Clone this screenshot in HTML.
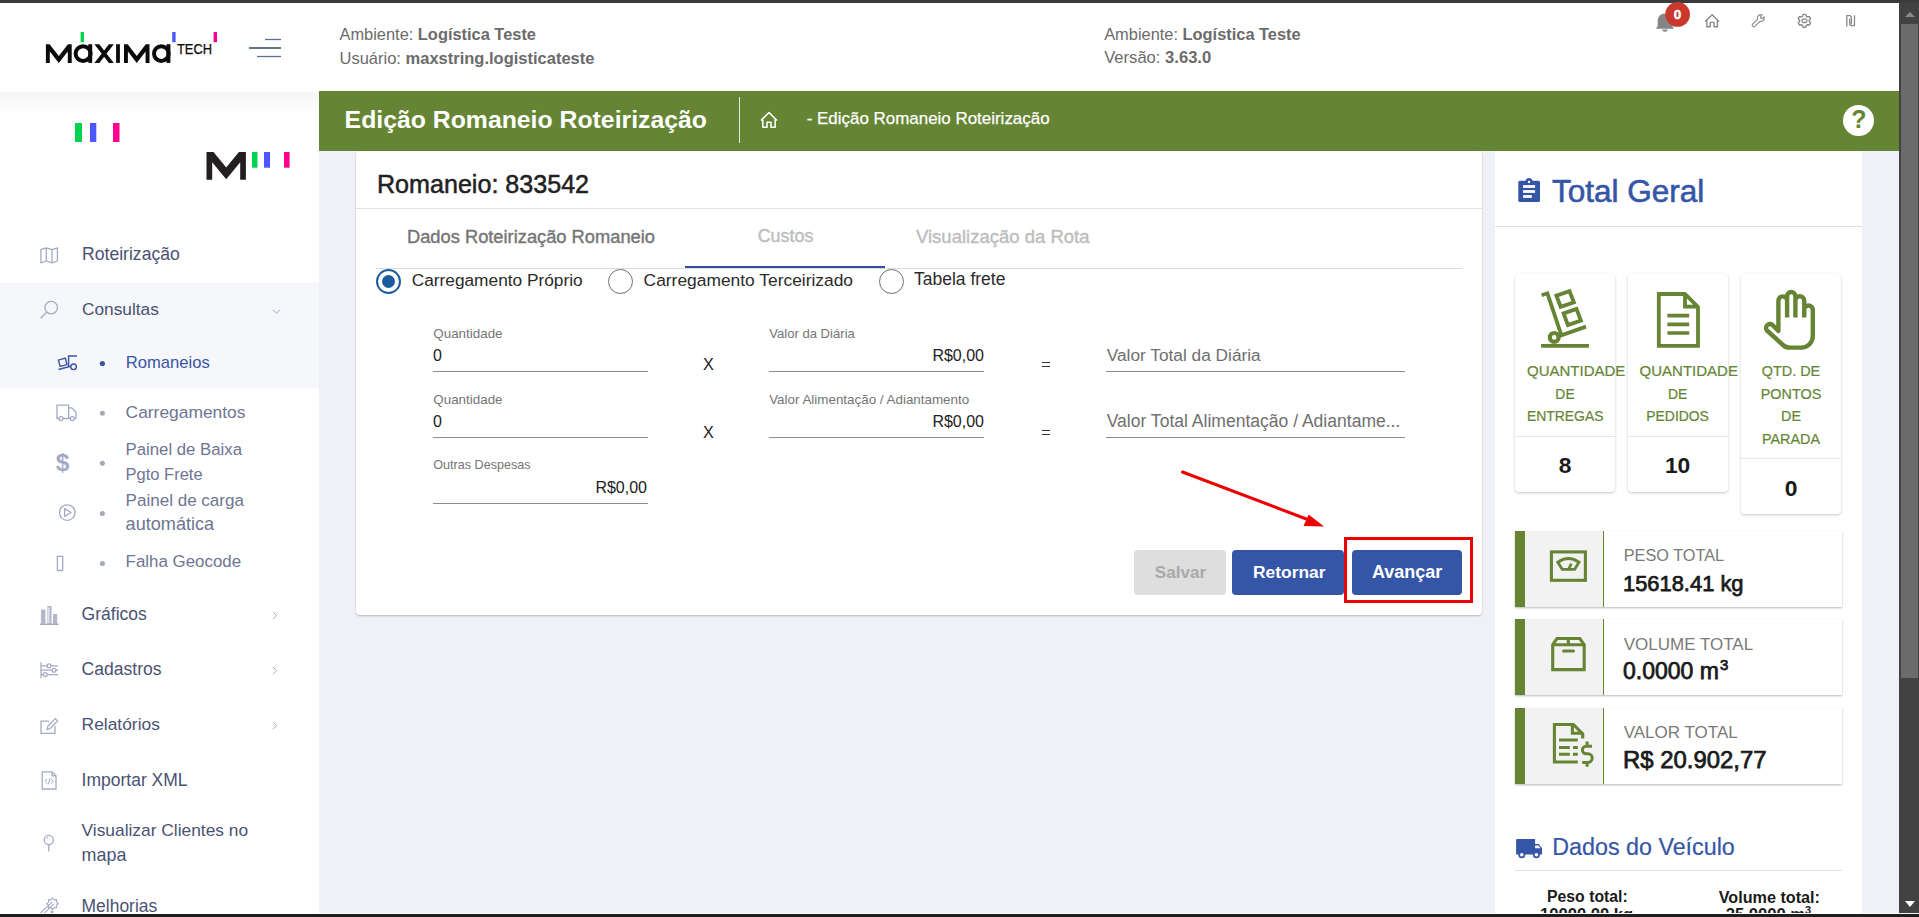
<!DOCTYPE html>
<html><head><meta charset="utf-8">
<style>
*{box-sizing:border-box;margin:0;padding:0}
html,body{width:1919px;height:917px;overflow:hidden;background:#f0f1f7;font-family:"Liberation Sans",sans-serif;position:relative}
.a{position:absolute}
.t{position:absolute;white-space:nowrap;line-height:1;font-size:calc(var(--fs)*1px);top:calc(var(--b)*1px - 0.8465px*var(--fs) + 0.5px)}
b{font-weight:bold}
svg{position:absolute;overflow:visible}
</style></head><body>
<!-- frame -->
<div class="a" style="left:0;top:0;width:1919px;height:3px;background:#3b3b3b"></div>
<div class="a" style="left:0;top:3px;width:1899px;height:88px;background:#fff"></div>
<div class="a" style="left:0;top:91px;width:319px;height:822px;background:#fff"></div>
<div class="a" style="left:0;top:92px;width:319px;height:22px;background:linear-gradient(#f4f4f4,#fff)"></div>
<div class="a" style="left:0;top:283px;width:319px;height:105px;background:#f6f7fa"></div>
<div class="a" style="left:319px;top:91px;width:1580px;height:60px;background:#658535"></div>
<div class="a" style="left:1495px;top:151px;width:367px;height:762px;background:#fff"></div>
<div class="a" style="left:356px;top:151px;width:1126px;height:464px;background:#fff;border-radius:4px;box-shadow:0 1px 2px rgba(0,0,0,.25)"></div>
<!-- scrollbar -->
<div class="a" style="left:1899px;top:3px;width:20px;height:910px;background:#424242"></div>
<div class="a" style="left:1901px;top:24px;width:17px;height:654px;background:#6b6b6b"></div>
<div class="a" style="left:1905px;top:12px;width:0;height:0;border-left:5px solid transparent;border-right:5px solid transparent;border-bottom:5px solid #8a8a8a"></div>
<div class="a" style="left:1905px;top:901px;width:0;height:0;border-left:5px solid transparent;border-right:5px solid transparent;border-top:6px solid #fff"></div>



<!-- sidebar -->
<svg class="a" style="left:0;top:91px" width="319" height="100" viewBox="0 91 319 100">
 <rect x="75" y="123" width="7" height="19" fill="#00d44f"/>
 <rect x="90" y="123" width="6.3" height="19" fill="#4b57ff"/>
 <rect x="113" y="123" width="6.5" height="19" fill="#ff0090"/>
 <path d="M206.5 179.7 V152 H213.5 L226.2 167.5 L238.9 152 H245.9 V179.7 H240.2 V162.3 L226.2 179.2 L212.2 162.3 V179.7Z" fill="#231f20"/>
 <rect x="252" y="152" width="5.5" height="15.7" fill="#00d44f"/>
 <rect x="264" y="152" width="6" height="15.7" fill="#4b57ff"/>
 <rect x="284" y="152" width="5.6" height="15.7" fill="#ff0090"/>
</svg>
<svg class="a" style="left:0;top:230px" width="319" height="690" viewBox="0 230 319 690">
 <g fill="none" stroke="#a4aac4" stroke-width="1.3" stroke-linejoin="round">
  <path d="M40.9 249.6 L46.3 247.8 L52 249.6 L57.4 247.8 V261 L52 262.8 L46.3 261 L40.9 262.8Z M46.3 247.8 V261 M52 249.6 V262.8"/>
  <circle cx="51.2" cy="307.6" r="6.3"/><path d="M46.6 312.2 L40.6 318.2"/>
  <path d="M273 309.8 L276.6 313.3 L280.2 309.8" stroke-width="1"/>
 </g>
 <g fill="none" stroke="#3a55a5" stroke-width="1.4">
  <path d="M58.4 360.2 L65.3 358.2 L67 364.6 L60.2 366.5Z"/>
  <path d="M77 356 H68.6 V366"/>
  <circle cx="73.6" cy="366.8" r="2.8"/>
  <path d="M58.5 369.5 L70.6 366.3"/>
 </g>
 <circle cx="102.4" cy="363.5" r="2.6" fill="#3a55a5"/>
 <g fill="none" stroke="#a4aac4" stroke-width="1.3" stroke-linejoin="round">
  <path d="M59 418.5 H57 V405.2 H68.6 V418.5 H63 M68.6 407.8 H71.6 L76 412.2 V418.5 H74.4 M70.3 418.5 H68.6"/>
  <circle cx="61" cy="418.6" r="2"/><circle cx="72.3" cy="418.6" r="2"/>
  <circle cx="67.3" cy="512.6" r="7.8"/><path d="M64.6 508.6 V516.4 L71.2 512.5Z"/>
  <rect x="57.4" y="556.4" width="5.3" height="14.1"/>
 </g>
 <text x="62.6" y="471.2" text-anchor="middle" font-family="Liberation Sans" font-weight="bold" font-size="24.5" fill="#a4aac4">$</text>
 <g fill="#a3a7b8"><circle cx="102.4" cy="413.3" r="2.5"/><circle cx="102.4" cy="463.2" r="2.5"/><circle cx="102.4" cy="513.6" r="2.5"/><circle cx="102.4" cy="563.4" r="2.5"/></g>
 <g fill="none" stroke="#a4aac4" stroke-width="1.3">
  <path d="M40 624.3 H58.6" stroke-width="1.4"/><path d="M40.9 609.5 H45.5 V624 H40.9Z M47.4 606 H51.6 V624 H47.4Z M53 614 H57.2 V624 H53Z" fill="#b4b8cc" stroke="none"/><path d="M48.8 607.5 V623" stroke="#eceef5" stroke-width="1.2"/>
  <path d="M41 662.2 V678.5 M41 665.8 H58 M41 670.2 H58 M41 674.6 H58"/>
  <circle cx="49" cy="665.8" r="1.9" fill="#fff"/><circle cx="54" cy="670.2" r="1.9" fill="#fff"/><circle cx="45.2" cy="674.6" r="1.9" fill="#fff"/>
  <path d="M49 721.2 H41 V733.4 H55 V726"/><path d="M47.2 729.5 L47.8 726.2 L55.2 718.6 L57.5 720.9 L50.2 728.4Z"/>
  <path d="M42.2 771.8 H52 L56 775.8 V789 H42.2Z M52 771.8 V775.8 H56"/><path d="M47 778.8 L45 781.3 L47 783.8 M51.2 778.8 L53.2 781.3 L51.2 783.8 M50 778.2 L48.2 784.4" stroke-width="1"/>
  <circle cx="48.8" cy="840" r="4.6"/><path d="M48.8 844.6 V851.6"/><path d="M46.8 838.8 A2 2 0 0 1 48.2 837.2" stroke-width="1"/>
  <path d="M39.9 913.6 L52.2 901.8 M43.7 913.6 L53.7 904.1" stroke-width="1.1"/><path d="M52.50 898.00 L50.89 899.82 L48.47 899.67 L48.62 902.09 L46.80 903.70 L48.62 905.31 L48.47 907.73 L50.89 907.58 L52.50 909.40 L54.11 907.58 L56.53 907.73 L56.38 905.31 L58.20 903.70 L56.38 902.09 L56.53 899.67 L54.11 899.82Z" stroke-width="1.1"/><circle cx="52" cy="912" r="0.8" fill="#a4aac4"/>
 </g>
 <g fill="none" stroke="#a4aac4" stroke-width="1"><path d="M273 612 L276.6 615.6 L273 619.2 M273 667 L276.6 670.6 L273 674.2 M273 722 L276.6 725.6 L273 729.2"/></g>
</svg>
<div class="t" style="--fs:17.6;--b:260.6;left:82px;color:#4a5274">Roteirização</div>
<div class="t" style="--fs:17.3;--b:315.3;left:82px;color:#4a5274">Consultas</div>
<div class="t" style="--fs:16.6;--b:368.3;left:125.8px;color:#3a55a5">Romaneios</div>
<div class="t" style="--fs:17.4;--b:418.4;left:125.6px;color:#6e7593">Carregamentos</div>
<div class="t" style="--fs:16.75;--b:455.9;left:125.6px;color:#6e7593">Painel de Baixa</div>
<div class="t" style="--fs:16.5;--b:479.9;left:125.6px;color:#6e7593">Pgto Frete</div>
<div class="t" style="--fs:17.04;--b:506;left:125.6px;color:#6e7593">Painel de carga</div>
<div class="t" style="--fs:18.1;--b:529.6;left:125.6px;color:#6e7593">automática</div>
<div class="t" style="--fs:16.9;--b:567.8;left:125.6px;color:#6e7593">Falha Geocode</div>
<div class="t" style="--fs:17.55;--b:620.4;left:81.6px;color:#4a5274">Gráficos</div>
<div class="t" style="--fs:17.55;--b:675.6;left:81.6px;color:#4a5274">Cadastros</div>
<div class="t" style="--fs:17.4;--b:730.7;left:81.6px;color:#4a5274">Relatórios</div>
<div class="t" style="--fs:17.5;--b:785.9;left:81.6px;color:#4a5274">Importar XML</div>
<div class="t" style="--fs:17.35;--b:836.6;left:81.6px;color:#4a5274">Visualizar Clientes no</div>
<div class="t" style="--fs:17.9;--b:861.3;left:81.6px;color:#4a5274">mapa</div>
<div class="t" style="--fs:17.45;--b:912;left:81.6px;color:#4a5274">Melhorias</div>

<!-- card -->
<div class="t" style="--fs:25.1;--b:193;left:377px;color:#212121;-webkit-text-stroke:0.5px #212121">Romaneio: 833542</div>
<div class="a" style="left:356px;top:208px;width:1126px;height:1px;background:#e3e3e3"></div>
<div class="t" style="--fs:18.3;--b:242.7;left:407px;color:#757575;-webkit-text-stroke:0.4px #757575">Dados Roteirização Romaneio</div>
<div class="t" style="--fs:17.9;--b:242.7;left:757.7px;color:#bdbdbd;-webkit-text-stroke:0.4px #bdbdbd">Custos</div>
<div class="t" style="--fs:18.5;--b:242.7;left:916px;color:#bdbdbd;-webkit-text-stroke:0.4px #bdbdbd">Visualização da Rota</div>
<div class="a" style="left:376px;top:268px;width:1086px;height:1px;background:#dcdcdc"></div>
<div class="a" style="left:685px;top:266px;width:200px;height:2px;background:#2f4da6"></div>
<div class="a" style="left:375.7px;top:269px;width:25px;height:25px;border:2.6px solid #1d5c9c;border-radius:50%"></div>
<div class="a" style="left:381.6px;top:274.9px;width:13.2px;height:13.2px;background:#1d5c9c;border-radius:50%"></div>
<div class="a" style="left:607.9px;top:269px;width:25px;height:25px;border:1.6px solid #707070;border-radius:50%"></div>
<div class="a" style="left:878.6px;top:269px;width:25px;height:25px;border:1.6px solid #707070;border-radius:50%"></div>
<div class="t" style="--fs:17.3;--b:285.8;left:411.7px;color:#2b2b2b">Carregamento Próprio</div>
<div class="t" style="--fs:17.4;--b:285.8;left:643.6px;color:#2b2b2b">Carregamento Terceirizado</div>
<div class="t" style="--fs:17.5;--b:285.8;left:914px;color:#2b2b2b">Tabela frete</div>

<div class="t" style="--fs:13.4;--b:337.5;left:433.3px;color:#757575">Quantidade</div>
<div class="t" style="--fs:16;--b:360.8;left:433px;color:#212121">0</div>
<div class="a" style="left:433px;top:371px;width:215px;height:1px;background:#8e8e8e"></div>
<div class="t" style="--fs:16.2;--b:369;left:703px;color:#212121">X</div>
<div class="t" style="--fs:13.4;--b:403.5;left:433.3px;color:#757575">Quantidade</div>
<div class="t" style="--fs:16;--b:426.7;left:433px;color:#212121">0</div>
<div class="a" style="left:433px;top:437px;width:215px;height:1px;background:#8e8e8e"></div>
<div class="t" style="--fs:16.2;--b:436.8;left:703px;color:#212121">X</div>
<div class="t" style="--fs:12.6;--b:469.6;left:433.3px;color:#757575">Outras Despesas</div>
<div class="t" style="--fs:16;--b:493.2;left:595.4px;color:#212121">R$0,00</div>
<div class="a" style="left:433px;top:503px;width:215px;height:1px;background:#8e8e8e"></div>

<div class="t" style="--fs:13.1;--b:337.5;left:769.2px;color:#757575">Valor da Diária</div>
<div class="t" style="--fs:16;--b:360.8;left:932.4px;color:#212121">R$0,00</div>
<div class="a" style="left:769px;top:371px;width:215px;height:1px;background:#8e8e8e"></div>
<div class="t" style="--fs:13.4;--b:403.5;left:769.2px;color:#757575">Valor Alimentação / Adiantamento</div>
<div class="t" style="--fs:16;--b:426.7;left:932.4px;color:#212121">R$0,00</div>
<div class="a" style="left:769px;top:437px;width:215px;height:1px;background:#8e8e8e"></div>
<div class="a" style="left:1041.5px;top:362px;width:8px;height:1.3px;background:#333"></div>
<div class="a" style="left:1041.5px;top:366px;width:8px;height:1.3px;background:#333"></div>
<div class="a" style="left:1041.5px;top:430px;width:8px;height:1.3px;background:#333"></div>
<div class="a" style="left:1041.5px;top:434px;width:8px;height:1.3px;background:#333"></div>

<div class="t" style="--fs:17.3;--b:361;left:1106.7px;color:#6f6f6f">Valor Total da Diária</div>
<div class="a" style="left:1106px;top:371px;width:299px;height:1px;background:#8e8e8e"></div>
<div class="t" style="--fs:17.55;--b:427;left:1106.7px;color:#6f6f6f">Valor Total Alimentação / Adiantame...</div>
<div class="a" style="left:1106px;top:437px;width:299px;height:1px;background:#8e8e8e"></div>

<div class="a" style="left:1134px;top:550px;width:92px;height:45px;background:#dedede;border-radius:4px"></div>
<div class="a" style="left:1232px;top:550px;width:112px;height:45px;background:#3556a7;border-radius:4px"></div>
<div class="a" style="left:1352px;top:550px;width:110px;height:45px;background:#3556a7;border-radius:4px"></div>
<div class="t" style="--fs:17.2;--b:578.2;left:1154.7px;color:#a9a9a9;font-weight:bold">Salvar</div>
<div class="t" style="--fs:17.4;--b:578.2;left:1253px;color:#fff;font-weight:bold">Retornar</div>
<div class="t" style="--fs:18;--b:578.2;left:1371.9px;color:#fff;font-weight:bold">Avançar</div>
<div class="a" style="left:1344px;top:537px;width:129px;height:66px;border:3px solid #ee0000"></div>
<svg class="a" style="left:1170px;top:460px" width="170" height="80" viewBox="1170 460 170 80">
 <path d="M1182.5 472 L1309 520" stroke="#ee0000" stroke-width="3" stroke-linecap="round"/>
 <path d="M1324 526.4 L1303.5 526 L1308.7 514.6Z" fill="#ee0000"/>
</svg>

<!-- right panel -->
<svg class="a" style="left:1510px;top:170px" width="40" height="40" viewBox="1510 170 40 40">
 <path d="M1519.8 180.7 H1525.5 A3.6 3.6 0 0 1 1532.5 180.7 H1538.5 A1.5 1.5 0 0 1 1540 182.2 V200.6 A1.5 1.5 0 0 1 1538.5 202.1 H1519.8 A1.5 1.5 0 0 1 1518.3 200.6 V182.2 A1.5 1.5 0 0 1 1519.8 180.7Z" fill="#3556a7"/>
 <circle cx="1529" cy="181.9" r="1.2" fill="#fff"/>
 <rect x="1523.1" y="185.1" width="12" height="2.8" fill="#fff"/>
 <rect x="1523.1" y="190.1" width="12" height="2.8" fill="#fff"/>
 <rect x="1523.1" y="195.1" width="8.7" height="2.8" fill="#fff"/>
</svg>
<div class="t" style="--fs:31.5;--b:201.7;left:1551.9px;color:#3556a7;-webkit-text-stroke:0.6px #3556a7">Total Geral</div>
<div class="a" style="left:1495px;top:226px;width:367px;height:1px;background:#e0e0e0"></div>

<div class="a" style="left:1515px;top:274px;width:100px;height:218px;background:#fff;border-radius:4px;box-shadow:0 1px 3px rgba(0,0,0,.22)"></div>
<div class="a" style="left:1627.6px;top:274px;width:100px;height:218px;background:#fff;border-radius:4px;box-shadow:0 1px 3px rgba(0,0,0,.22)"></div>
<div class="a" style="left:1741px;top:274px;width:100px;height:240px;background:#fff;border-radius:4px;box-shadow:0 1px 3px rgba(0,0,0,.22)"></div>
<div class="a" style="left:1515px;top:436px;width:100px;height:1px;background:#e6e6e6"></div>
<div class="a" style="left:1627.6px;top:436px;width:100px;height:1px;background:#e6e6e6"></div>
<div class="a" style="left:1741px;top:458px;width:100px;height:1px;background:#e6e6e6"></div>
<svg class="a" style="left:1530px;top:280px" width="300" height="80" viewBox="1530 280 300 80">
 <g fill="none" stroke="#658535" stroke-width="3.8" stroke-linejoin="miter">
  <path d="M1541.1 345.9 H1588.9"/>
  <circle cx="1554.2" cy="337.4" r="4.4" stroke-width="4.2"/>
  <path d="M1541.6 295.2 L1547.4 293.3 L1561.4 335.4 L1586 326.6"/>
  <path d="M1556.4 295.6 L1569.5 291.2 L1573.9 302.4 L1560.7 306.8Z"/>
  <path d="M1563.6 313.4 L1576.5 308.9 L1580.9 320.5 L1567.9 325Z"/>
  <path d="M1658.8 294 H1685 L1698 307 V345.8 H1658.8Z M1685 294 V306.6 H1698"/>
  <path d="M1667.4 315.6 H1689.2 M1667.4 324.3 H1689.2 M1667.4 333 H1689.2" stroke-width="3.7"/>
 </g>
 <path d="M1787.1 317.5 V300.75 A4.35 4.35 0 0 0 1778.4 300.75 V331 L1772.5 325 A3.9 3.9 0 0 0 1767 330.5 L1783 345 A10 10 0 0 0 1790 347.6 H1801.3 A11.5 11.5 0 0 0 1812.8 336.1 V309.3 A4.3 4.3 0 0 0 1804.25 309.3 V317.5 M1787.1 300.75 V296.2 A4.15 4.15 0 0 1 1795.4 296.2 V317.5 M1795.4 300.6 A4.4 4.4 0 0 1 1804.25 300.6 V309.3" fill="none" stroke="#658535" stroke-width="4.4" stroke-linejoin="round"/>
</svg>
<div class="a" style="left:1515px;top:355px;width:324px;height:100px;color:#658535;font-size:15px;line-height:22.5px;font-family:'Liberation Sans';-webkit-text-stroke:0.2px #658535">
 <div class="a" style="left:12px;top:5px;width:76px;text-align:center">QUANTIDADE<br><span style="font-size:13.9px">DE<br>ENTREGAS</span></div>
 <div class="a" style="left:124.6px;top:5px;width:76px;text-align:center">QUANTIDADE<br><span style="font-size:13.9px">DE<br>PEDIDOS</span></div>
 <div class="a" style="left:238px;top:5px;width:76px;text-align:center;font-size:14.4px">QTD. DE<br>PONTOS<br>DE<br>PARADA</div>
</div>
<div class="t" style="--fs:22.8;--b:473;left:1515px;width:100px;text-align:center;color:#1a1a1a;font-weight:bold">8</div>
<div class="t" style="--fs:22.8;--b:473;left:1627.6px;width:100px;text-align:center;color:#1a1a1a;font-weight:bold">10</div>
<div class="t" style="--fs:22.8;--b:496;left:1741px;width:100px;text-align:center;color:#1a1a1a;font-weight:bold">0</div>

<div class="a" style="left:1515px;top:531px;width:327px;height:76px;background:#fff;box-shadow:0 1px 2px rgba(0,0,0,.28)"></div>
<div class="a" style="left:1515px;top:619px;width:327px;height:76px;background:#fff;box-shadow:0 1px 2px rgba(0,0,0,.28)"></div>
<div class="a" style="left:1515px;top:708px;width:327px;height:76px;background:#fff;box-shadow:0 1px 2px rgba(0,0,0,.28)"></div>
<div class="a" style="left:1515px;top:531px;width:10px;height:76px;background:#658535"></div>
<div class="a" style="left:1515px;top:619px;width:10px;height:76px;background:#658535"></div>
<div class="a" style="left:1515px;top:708px;width:10px;height:76px;background:#658535"></div>
<div class="a" style="left:1525px;top:531px;width:78px;height:76px;background:#f2f2f2;border-right:1px solid #658535;box-sizing:content-box"></div>
<div class="a" style="left:1525px;top:619px;width:78px;height:76px;background:#f2f2f2;border-right:1px solid #658535;box-sizing:content-box"></div>
<div class="a" style="left:1525px;top:708px;width:78px;height:76px;background:#f2f2f2;border-right:1px solid #658535;box-sizing:content-box"></div>
<svg class="a" style="left:1540px;top:540px" width="60" height="240" viewBox="1540 540 60 240">
 <g fill="none" stroke="#658535" stroke-width="3.1">
  <rect x="1551.4" y="551.9" width="34" height="28.4"/>
  <path d="M1557.8 562.2 Q1568.4 555 1579 562.2 L1574.6 569.4 H1562.3Z" stroke-width="2.9"/>
  <path d="M1568.4 569.4 L1571.4 563.6" stroke-width="2.6"/>
  <path d="M1552.7 669.6 V644.7 L1557 638.5 H1579.8 L1584.2 644.7 V669.6Z M1552.7 644.7 H1584.2 M1568.3 638.5 V644.7"/>
  <path d="M1563.5 651.1 H1573.5" stroke-linecap="round" stroke-width="3"/>
  <path d="M1577.8 762 H1554.4 V724.5 H1573.4 L1582.7 733.8 V738.6 M1572.4 725 V733.3 H1582"/>
  <path d="M1559 740 H1577.8 M1559 747.5 H1569.8 M1573 747.5 H1577.8 M1559 754.3 H1569.8 M1573 754.3 H1577.8" stroke-width="3"/>
  <path d="M1592 746.2 H1586 A3.6 3.8 0 0 0 1586 753.8 H1588 A4.2 4.3 0 0 1 1588 762.4 H1582.2 M1587.1 741.5 V746 M1587.1 762.5 V766.7" stroke-width="3"/>
 </g>
</svg>
<div class="t" style="--fs:16.3;--b:560.6;left:1623.7px;color:#7a7a7a">PESO TOTAL</div>
<div class="t" style="--fs:21.9;--b:590.8;left:1623px;color:#1a1a1a;-webkit-text-stroke:0.75px #1a1a1a">15618.41 kg</div>
<div class="t" style="--fs:17;--b:649.8;left:1623.7px;color:#7a7a7a">VOLUME TOTAL</div>
<div class="t" style="--fs:23;--b:678.8;left:1623px;color:#1a1a1a;-webkit-text-stroke:0.75px #1a1a1a">0.0000 m<span style="font-size:15px;position:relative;top:-9px;margin-left:1px">3</span></div>
<div class="t" style="--fs:17;--b:737.4;left:1623.7px;color:#7a7a7a">VALOR TOTAL</div>
<div class="t" style="--fs:23.9;--b:767.3;left:1623px;color:#1a1a1a;-webkit-text-stroke:0.75px #1a1a1a">R$ 20.902,77</div>

<svg class="a" style="left:1510px;top:830px" width="40" height="40" viewBox="1510 830 40 40">
 <path d="M1517.3 839 H1535.1 V844 H1538.6 L1542.1 848.3 V854.5 H1516.1 V840.2 A1.2 1.2 0 0 1 1517.3 839Z" fill="#3556a7"/>
 <path d="M1535.1 845.5 H1538.5 L1540.5 848.3 H1535.1Z" fill="#fff"/>
 <circle cx="1521.8" cy="854.7" r="3.5" fill="#3556a7"/><circle cx="1521.8" cy="854.7" r="1.8" fill="#fff"/>
 <circle cx="1536.4" cy="854.7" r="3.5" fill="#3556a7"/><circle cx="1536.4" cy="854.7" r="1.8" fill="#fff"/>
</svg>
<div class="t" style="--fs:23.3;--b:855.6;left:1552.2px;color:#3556a7;-webkit-text-stroke:0.2px #3556a7">Dados do Veículo</div>
<div class="a" style="left:1515px;top:870px;width:327px;height:1px;background:#e0e0e0"></div>
<div class="t" style="--fs:15.8;--b:901.9;left:1547px;color:#1a1a1a;font-weight:bold">Peso total:</div>
<div class="t" style="--fs:16.2;--b:901.9;left:1718.7px;color:#1a1a1a;font-weight:bold">Volume total:</div>
<div class="t" style="--fs:16.6;--b:921;left:1540px;color:#1a1a1a;font-weight:bold">10000.00 kg</div>
<div class="t" style="--fs:16.6;--b:921;left:1725.7px;color:#1a1a1a;font-weight:bold">25.0000 m<span style="font-size:11px;position:relative;top:-6px">3</span></div>
<!-- header -->
<svg class="a" style="left:0;top:0" width="300" height="91" viewBox="0 0 300 91">
 <g fill="#0d0a0d">
  <path d="M45.9 62.9 V44.2 H49.599999999999994 L58.8 56.0 L68.0 44.2 H71.7 V62.9 H67.8 V51.6 L58.8 62.9 L49.8 51.6 V62.9Z"/>
  <path d="M94.4 44.2 H99.30000000000001 L113.8 62.9 H108.89999999999999Z M108.89999999999999 44.2 H113.8 L99.30000000000001 62.9 H94.4Z"/>
  <rect x="116.1" y="44.2" width="3.8" height="18.7"/>
  <path d="M124 62.9 V44.2 H127.7 L136.75 56.0 L145.79999999999998 44.2 H149.5 V62.9 H145.6 V51.6 L136.75 62.9 L127.9 51.6 V62.9Z"/>
  <rect x="88.3" y="44.2" width="3.9" height="18.7"/><rect x="166.5" y="44.2" width="3.9" height="18.7"/>
 </g>
 <g fill="none" stroke="#0d0a0d" stroke-width="4">
  <ellipse cx="83.1" cy="53.55" rx="7.5" ry="7.35"/>
  <ellipse cx="161.3" cy="53.55" rx="7.3" ry="7.35"/>
 </g>
 <rect x="80.6" y="32" width="3.4" height="10.2" fill="#00d44f"/>
 <rect x="172.2" y="32" width="3.4" height="10.2" fill="#4b57ff"/>
 <rect x="213.6" y="32" width="3.4" height="10.2" fill="#ff0090"/>
 <text x="177" y="54.4" font-family="Liberation Sans" font-size="14" fill="#0d0a0d" stroke="#0d0a0d" stroke-width="0.25" textLength="35" lengthAdjust="spacingAndGlyphs">TECH</text>
 <g stroke="#57718d" stroke-linecap="butt">
  <path d="M265 39.5 H281" stroke-width="1.3"/>
  <path d="M249 48 H281" stroke-width="1.9"/>
  <path d="M257 56.5 H281" stroke-width="1.3"/>
 </g>
</svg>
<div class="t" style="--fs:16.4;--b:39.7;left:339.5px;color:#6b6b6b">Ambiente: <b>Logística Teste</b></div>
<div class="t" style="--fs:16.5;--b:63.5;left:339.5px;color:#6b6b6b">Usuário: <b>maxstring.logisticateste</b></div>
<div class="t" style="--fs:16.4;--b:39.7;left:1104.2px;color:#6b6b6b">Ambiente: <b>Logística Teste</b></div>
<div class="t" style="--fs:16.6;--b:63.6;left:1104.2px;color:#6b6b6b">Versão: <b>3.63.0</b></div>
<!-- top icons -->
<svg class="a" style="left:1640px;top:0" width="230" height="40" viewBox="1640 0 230 40">
 <path d="M1665 13.5 c-4.5 0 -7.3 3.4 -7.3 7.8 v4.8 l-1.8 2.6 h18.2 l-1.8 -2.6 v-4.8 c0 -4.4 -2.8 -7.8 -7.3 -7.8z" fill="#858585"/>
 <path d="M1662.3 29.6 a2.7 2.2 0 0 0 5.4 0z" fill="#858585"/>
 <circle cx="1677.6" cy="14.4" r="12.4" fill="#c9382c"/>
 <text x="1677.6" y="19.3" text-anchor="middle" font-family="Liberation Sans" font-weight="bold" font-size="13.5" fill="#fff" stroke="#fff" stroke-width="0.4">0</text>
 <g fill="none" stroke="#8a8a8a" stroke-width="1.4" stroke-linejoin="round">
  <path d="M1705.2 21.6 L1712.1 14.8 L1719 21.6 M1706.8 20.2 V26.8 H1710.2 V22.4 H1714 V26.8 H1717.4 V20.2"/>
  <path transform="translate(1758.3 20.6) scale(0.86) translate(-1759.3 -20.5)" d="M1752.6 24.5 L1758.4 18.7 A4 4 0 0 1 1763.8 13.9 L1761.9 15.8 L1762.3 17.6 L1764.1 18 L1766 16.1 A4 4 0 0 1 1761.2 21.4 L1755.4 27.2 A1.95 1.95 0 0 1 1752.6 24.5Z" stroke-width="1.3"/>
  <path d="M1806.39 16.32 L1805.64 14.42 L1803.16 14.42 L1802.41 16.32 L1801.52 16.84 L1799.49 16.54 L1798.25 18.68 L1799.53 20.29 L1799.53 21.31 L1798.25 22.92 L1799.49 25.06 L1801.52 24.76 L1802.41 25.28 L1803.16 27.18 L1805.64 27.18 L1806.39 25.28 L1807.28 24.76 L1809.31 25.06 L1810.55 22.92 L1809.27 21.31 L1809.27 20.29 L1810.55 18.68 L1809.31 16.54 L1807.28 16.84Z" stroke-width="1.4"/>
  <rect x="1801.9" y="19.2" width="5" height="3.3" rx="1.4" stroke-width="1.3"/>
  <path d="M1846.8 26.6 V15.7 H1849.6 A1.8 1.8 0 0 1 1851.4 17.5 V24.2 M1849.7 18.4 V23.6 A2 2 0 0 0 1851.7 25.6 H1854.5 V15.2" stroke-width="1.3"/>
 </g>
</svg>
<!-- green bar -->
<div class="t" style="--fs:24.8;--b:128;left:344.6px;color:#fff;font-weight:bold">Edição Romaneio Roteirização</div>
<div class="a" style="left:739px;top:97px;width:1px;height:46px;background:#e6ebdf"></div>
<svg class="a" style="left:755px;top:105px" width="30" height="30" viewBox="755 105 30 30">
 <path d="M761 120.5 L769 112.5 L777 120.5 M762.8 118.8 V127.3 H767 V122.3 H771 V127.3 H775.2 V118.8" fill="none" stroke="#fff" stroke-width="1.6" stroke-linejoin="round"/>
</svg>
<div class="t" style="--fs:16.95;--b:125.2;left:806.7px;color:#fff;-webkit-text-stroke:0.25px #fff">- Edição Romaneio Roteirização</div>
<svg class="a" style="left:1840px;top:102px" width="40" height="40" viewBox="1840 102 40 40">
 <circle cx="1858.5" cy="120.5" r="15.5" fill="#fff"/>
 <text x="1858.8" y="127.9" text-anchor="middle" font-family="Liberation Sans" font-weight="bold" font-size="25" fill="#658535">?</text>
</svg>
<div class="a" style="left:0;top:913px;width:1899px;height:1px;background:#fff;z-index:10"></div>
<div class="a" style="left:0;top:914px;width:1919px;height:3px;background:#1e1e1e;z-index:10"></div>
</body></html>
